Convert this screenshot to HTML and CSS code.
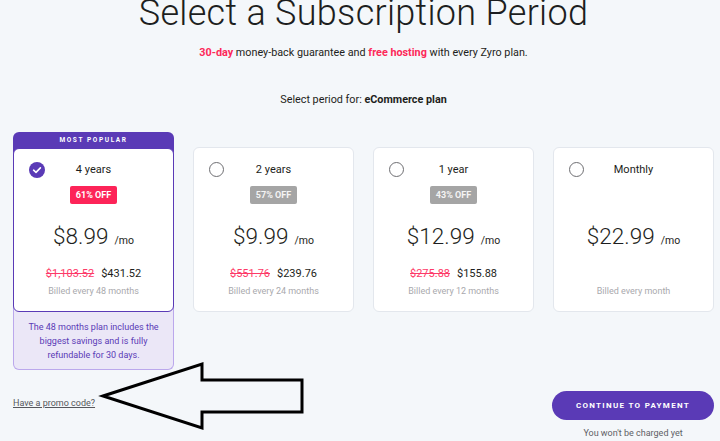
FILE: index.html
```html
<!DOCTYPE html>
<html lang="en">
<head>
<meta charset="utf-8">
<title>Select a Subscription Period</title>
<link rel="stylesheet" href="styles.css">
</head>
<body>
<div class="page">
  <div class="intro">
    <h1 class="title">Select a Subscription Period</h1>
    <p class="subtitle"><span class="hl">30-day</span> money-back guarantee and <span class="hl">free hosting</span> with every Zyro plan.</p>
    <p class="period-for">Select period for: <b>eCommerce plan</b></p>
  </div>

  <div class="plans">
    <div class="plan-featured">
      <div class="popular">MOST POPULAR</div>
      <div class="card card-selected">
        <div class="card-head">
          <span class="radio radio-on">
            <svg viewBox="0 0 16 16" width="16" height="16"><circle cx="8" cy="8" r="8" fill="#5a3ab6"/><path d="M4.6 8.2 L7 10.4 L11.4 5.9" fill="none" stroke="#fff" stroke-width="1.6" stroke-linecap="round" stroke-linejoin="round"/></svg>
          </span>
          <span class="period">4 years</span>
        </div>
        <div class="badge-slot"><span class="badge badge-pink">61% OFF</span></div>
        <div class="price"><span class="amount">$8.99</span><span class="per">/mo</span></div>
        <div class="total"><s class="old">$1,103.52</s><span class="new">$431.52</span></div>
        <div class="billed">Billed every 48 months</div>
      </div>
      <div class="note">The 48 months plan includes the biggest savings and is fully refundable for 30 days.</div>
    </div>

    <div class="card card-plain">
      <div class="card-head">
        <span class="radio"></span>
        <span class="period">2 years</span>
      </div>
      <div class="badge-slot"><span class="badge badge-grey">57% OFF</span></div>
      <div class="price"><span class="amount">$9.99</span><span class="per">/mo</span></div>
      <div class="total"><s class="old">$551.76</s><span class="new">$239.76</span></div>
      <div class="billed">Billed every 24 months</div>
    </div>

    <div class="card card-plain">
      <div class="card-head">
        <span class="radio"></span>
        <span class="period">1 year</span>
      </div>
      <div class="badge-slot"><span class="badge badge-grey">43% OFF</span></div>
      <div class="price"><span class="amount">$12.99</span><span class="per">/mo</span></div>
      <div class="total"><s class="old">$275.88</s><span class="new">$155.88</span></div>
      <div class="billed">Billed every 12 months</div>
    </div>

    <div class="card card-plain">
      <div class="card-head">
        <span class="radio"></span>
        <span class="period">Monthly</span>
      </div>
      <div class="badge-slot"></div>
      <div class="price"><span class="amount">$22.99</span><span class="per">/mo</span></div>
      <div class="total"></div>
      <div class="billed">Billed every month</div>
    </div>
  </div>

  <div class="footer-row">
    <a class="promo" href="#">Have a promo code?</a>
    <div class="cta">
      <button class="pay" type="button">CONTINUE TO PAYMENT</button>
      <div class="charged">You won't be charged yet</div>
    </div>
  </div>

  <svg class="arrow" width="720" height="441" viewBox="0 0 720 441">
    <polygon points="103,401 202,369 202,385 302,385 302,417 202,417 202,433" fill="none" stroke="#000" stroke-width="3" stroke-linejoin="miter"/>
  </svg>
</div>
</body>
</html>
```

FILE: styles.css
```css
* { box-sizing: border-box; }
html, body { margin: 0; padding: 0; }
body {
  background: #f4f7fa;
  font-family: Roboto, "Liberation Sans", Arial, sans-serif;
  color: #1d1e20;
  width: 720px;
  height: 441px;
  overflow: hidden;
}
.page { position: relative; width: 720px; height: 441px; }

.intro { padding-left: 7px; }
.title {
  margin: -5px 0 0;
  font-size: 36px;
  line-height: 36px;
  font-weight: 300;
  text-align: center;
  letter-spacing: 0.3px;
}
.subtitle {
  margin: 15px 0 0;
  font-size: 10.8px;
  line-height: 14px;
  text-align: center;
}
.hl { color: #fd2858; font-weight: 700; }
.period-for {
  margin: 33px 0 0;
  font-size: 10.8px;
  line-height: 14px;
  text-align: center;
}
.period-for b { font-weight: 700; }

.plans {
  display: flex;
  align-items: flex-start;
  gap: 19px;
  padding-left: 13px;
  margin-top: 25px;
}

.plan-featured { width: 161px; display: flex; flex-direction: column; }
.popular {
  height: 22px;
  background: #5a3ab6;
  border-radius: 6px 6px 0 0;
  color: #fff;
  font-size: 6.5px;
  font-weight: 700;
  letter-spacing: 1.6px;
  text-align: center;
  line-height: 16px;
}

.card {
  width: 161px;
  background: #fff;
  border-radius: 6px;
  display: flex;
  flex-direction: column;
  align-items: center;
  padding: 14px 0 14px;
}
.card-plain { border: 1px solid #e3e7ed; margin-top: 15px; height: 165px; }
.card-selected {
  border: 1.5px solid #5a3ab6;
  margin-top: -6px;
  height: 164px;
  position: relative;
  z-index: 1;
  padding-top: 13px;
}

.card-head {
  width: 100%;
  display: grid;
  grid-template-columns: 1fr auto 1fr;
  align-items: center;
  height: 14px;
  padding-left: 15px;
}
.radio {
  width: 15px;
  height: 15px;
  border: 1.4px solid #6e6e72;
  border-radius: 50%;
  justify-self: start;
}
.radio-on { border: none; width: 16px; height: 16px; display: block; }
.radio-on svg { display: block; }
.period {
  font-size: 11px;
  line-height: 14px;
  margin-left: -15px;
  text-align: center;
}

.badge-slot { height: 18px; margin-top: 10px; display: flex; justify-content: center; }
.badge {
  display: block;
  height: 18px;
  line-height: 18px;
  padding: 0 5.5px;
  border-radius: 2px;
  color: #fff;
  font-size: 9px;
  font-weight: 700;
}
.badge-pink { background: #fd2458; }
.badge-grey { background: #a5a5a5; color: #f4f4f4; }

.price {
  margin-top: 18px;
  height: 28px;
  line-height: 28px;
  display: flex;
  align-items: baseline;
  gap: 6px;
}
.amount { font-size: 22.5px; font-weight: 300; }
.per { font-size: 10.5px; }

.total {
  margin-top: 17px;
  height: 14px;
  line-height: 14px;
  font-size: 11px;
  display: flex;
  gap: 7px;
}
.old { color: #fd3a68; text-decoration-color: #fd3a68; }
.new { color: #1d1e20; }
.billed {
  margin-top: 4px;
  font-size: 9px;
  line-height: 12px;
  color: #a9a9ad;
}

.note {
  margin-top: -6px;
  padding: 14px 10px 7px;
  background: #ebe7f7;
  border: 1px solid #bba8ec;
  border-top: none;
  border-radius: 0 0 6px 6px;
  color: #5a3ab6;
  font-size: 9px;
  line-height: 14px;
  text-align: center;
}

.footer-row {
  display: flex;
  justify-content: space-between;
  align-items: flex-start;
  padding: 0 6px 0 13px;
  margin-top: 21px;
}
.promo {
  margin-top: 6px;
  color: #56575c;
  font-size: 9px;
  line-height: 12px;
  text-decoration: underline;
}
.cta { width: 162px; display: flex; flex-direction: column; align-items: center; }
.pay {
  width: 162px;
  height: 29px;
  border: none;
  border-radius: 15px;
  background: #5a3ab6;
  color: #fff;
  font-family: Roboto, "Liberation Sans", Arial, sans-serif;
  font-size: 8px;
  font-weight: 700;
  letter-spacing: 1.3px;
  padding: 0;
}
.charged {
  margin-top: 7px;
  color: #5f6065;
  font-size: 9px;
  line-height: 12px;
}

.arrow { position: absolute; left: 0; top: 0; pointer-events: none; }
```
